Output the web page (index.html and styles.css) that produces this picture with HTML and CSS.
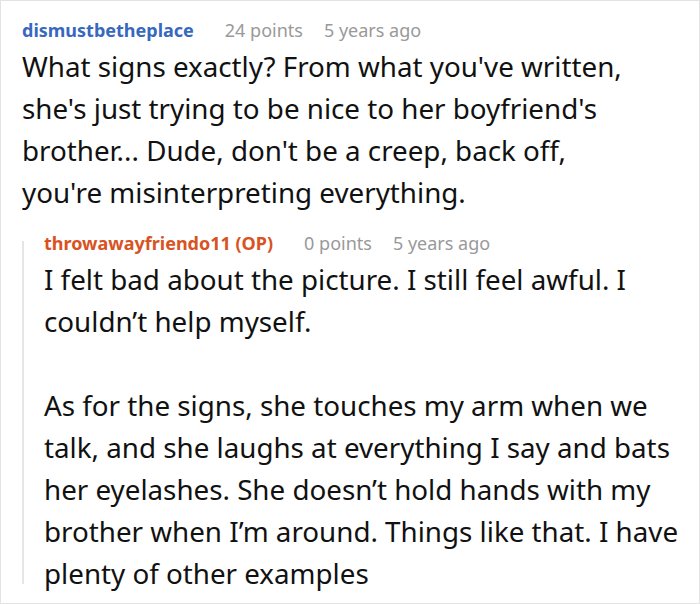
FILE: index.html
```html
<!DOCTYPE html>
<html>
<head>
<meta charset="utf-8">
<link rel="stylesheet" href="styles.css">
</head>
<body>
<div class="frame">
  <div class="comment">
    <div class="meta">
      <span class="user">dismustbetheplace</span>
      <span class="info">24 points</span>
      <span class="info">5 years ago</span>
    </div>
    <div class="body main">
      <p>What signs exactly? From what you've written, she's just trying to be nice to her boyfriend's brother... Dude, don't be a creep, back off, you're misinterpreting everything.</p>
    </div>
    <div class="reply">
      <div class="meta">
        <span class="user op">throwawayfriendo11 (OP)</span>
        <span class="info">0 points</span>
        <span class="info">5 years ago</span>
      </div>
      <div class="body">
        <p>I felt bad about the picture. I still feel awful. I couldn’t help myself.</p>
        <p>As for the signs, she touches my arm when we talk, and she laughs at everything I say and bats her eyelashes. She doesn’t hold hands with my brother when I’m around. Things like that. I have plenty of other examples</p>
      </div>
    </div>
  </div>
</div>
</body>
</html>
```
FILE: styles.css
```css
html, body {
  margin: 0;
  padding: 0;
  background: #fff;
}
.frame {
  box-sizing: border-box;
  width: 700px;
  height: 604px;
  border: 1px solid #e3e3e3;
  padding: 14px 14px 0 21px;
  overflow: hidden;
  font-family: "Noto Sans", "Open Sans", sans-serif;
  color: #111;
}
.meta {
  display: flex;
  align-items: baseline;
  gap: 21px;
  font-size: 18px;
  line-height: 30px;
}
.user {
  font-weight: 700;
  color: #3768be;
  margin-right: 10px;
}
.user.op {
  color: #d8531f;
}
.info {
  color: #999;
}
.body {
  font-size: 27.75px;
  line-height: 42px;
}
.body.main {
  padding-right: 40px;
}
.body p {
  margin: 0 0 42px 0;
}
.body p:last-child {
  margin-bottom: 0;
}
.reply {
  position: relative;
  margin-top: 15px;
  padding-left: 22px;
}
.reply::before {
  content: "";
  position: absolute;
  left: 0;
  top: 13px;
  bottom: 10px;
  width: 2px;
  background: #e6e6e6;
}
```
